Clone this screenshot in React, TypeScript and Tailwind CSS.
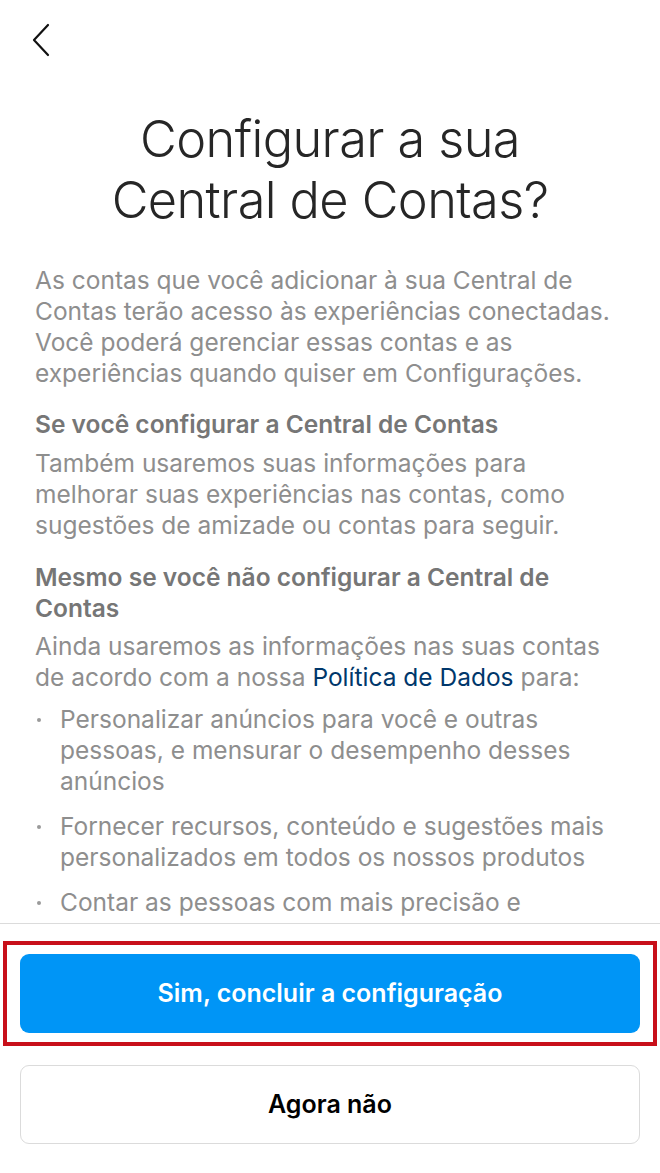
import React from "react";

const font = { fontFamily: "Inter, 'Noto Sans', sans-serif" };

function Bullet({ children }: { children: React.ReactNode }) {
  return (
    <li className="flex">
      <span className="w-[25px] shrink-0 h-[31px] flex items-center pl-[2px]">
        <span className="block w-[4px] h-[4px] rounded-full bg-[#9a9a9a]" />
      </span>
      <span>{children}</span>
    </li>
  );
}

export default function App() {
  return (
    <div className="w-[660px] h-[1173px] bg-white flex flex-col overflow-hidden" style={font}>
      <div className="h-[923px] shrink-0 overflow-hidden flex flex-col">
        <div className="h-[80px] shrink-0 pl-[30px] pt-[22px]">
          <svg width="22" height="36" viewBox="0 0 22 36" fill="none">
            <path d="M18 3 L4 18 L18 33" stroke="#111" strokeWidth="2.2" strokeLinecap="round" strokeLinejoin="round" />
          </svg>
        </div>
        <h1 className="shrink-0 mt-[28px] text-center text-[50.5px] leading-[61px] font-light tracking-[-0.6px] text-[#262626]">
          Configurar a sua
          <br />
          Central de Contas?
        </h1>
        <div className="shrink-0 px-[35px] mt-[35px] text-[24.5px] leading-[31px] text-[#8e8e8e] whitespace-nowrap">
          <p>
            As contas que você adicionar à sua Central de
            <br />
            Contas terão acesso às experiências conectadas.
            <br />
            Você poderá gerenciar essas contas e as
            <br />
            experiências quando quiser em Configurações.
          </p>
          <p className="mt-[20px] font-semibold text-[#767676]">Se você configurar a Central de Contas</p>
          <p className="mt-[8px]">
            Também usaremos suas informações para
            <br />
            melhorar suas experiências nas contas, como
            <br />
            sugestões de amizade ou contas para seguir.
          </p>
          <p className="mt-[21px] font-semibold text-[#767676]">
            Mesmo se você não configurar a Central de
            <br />
            Contas
          </p>
          <p className="mt-[7px]">
            Ainda usaremos as informações nas suas contas
            <br />
            de acordo com a nossa <span className="text-[#00376b]">Política de Dados</span> para:
          </p>
          <ul className="mt-[11px] flex flex-col gap-[14px]">
            <Bullet>
              Personalizar anúncios para você e outras
              <br />
              pessoas, e mensurar o desempenho desses
              <br />
              anúncios
            </Bullet>
            <Bullet>
              Fornecer recursos, conteúdo e sugestões mais
              <br />
              personalizados em todos os nossos produtos
            </Bullet>
            <Bullet>
              Contar as pessoas com mais precisão e
              <br />
              entender como elas usam os nossos produtos
            </Bullet>
          </ul>
        </div>
      </div>
      <div className="shrink-0 border-t border-[#dbdbdb]" />
      <div className="shrink-0 mt-[17px] mx-[3px] border-[4px] border-[#c8101a] px-[13px] py-[9px]">
        <button className="w-full h-[79px] rounded-[9px] bg-[#0095f6] text-white text-[25px] font-semibold">
          Sim, concluir a configuração
        </button>
      </div>
      <div className="shrink-0 mt-[19px] px-[20px]">
        <button className="w-full h-[79px] rounded-[9px] border border-[#dbdbdb] bg-white text-black text-[25px] font-semibold">
          Agora não
        </button>
      </div>
    </div>
  );
}
